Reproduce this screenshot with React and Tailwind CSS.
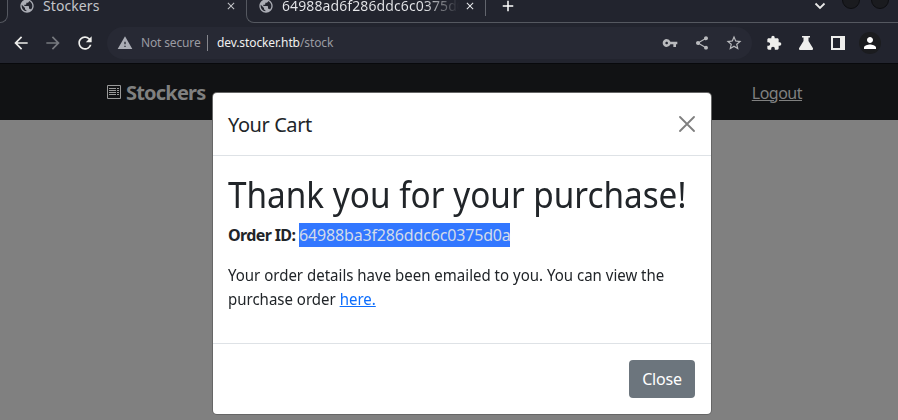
import React from "react";
import {
  MdPublic,
  MdClose,
  MdAdd,
  MdArrowBack,
  MdArrowForward,
  MdRefresh,
  MdWarning,
  MdVpnKey,
  MdShare,
  MdStarBorder,
  MdExtension,
  MdPerson,
} from "react-icons/md";

function TabStrip() {
  return (
    <div className="flex h-[23px] shrink-0 text-[#c4c5c9]">
      <div className="-ml-2 h-[23px] w-4 shrink-0 rounded-br-[8px] border-r border-b border-[#555860] bg-[#1d1f27]" />
      <div className="flex h-[23px] w-[238px] shrink-0 items-start pl-[11px]">
        <MdPublic className="-mt-[2px] size-[16px] shrink-0 text-[#abadb5]" />
        <span className="ml-[8px] flex-1 text-[14px] leading-[12px] tracking-[0.08px]">Stockers</span>
        <MdClose className="mt-0 mr-[9px] size-[12px] shrink-0" />
      </div>
      <div className="flex h-[23px] flex-1 items-start rounded-bl-[8px] border-b border-l border-[#555860] pl-[11px]">
        <MdPublic className="-mt-[2px] size-[16px] shrink-0 text-[#abadb5]" />
        <span className="ml-[8px] w-[177px] shrink-0 overflow-hidden bg-linear-to-r from-[#e7e8eb] from-80% to-transparent bg-clip-text text-[14px] leading-[12px] tracking-[0.1px] whitespace-nowrap text-transparent">
          64988ad6f286ddc6c0375d0a
        </span>
        <MdClose className="ml-[5px] size-[12px] shrink-0 text-[#e7e8eb]" />
        <div className="ml-[9px] h-4 w-px bg-[#62656d]" />
        <MdAdd className="-mt-[3px] ml-[13px] size-[18px] shrink-0 text-white" />
        <div className="flex-1" />
        <svg className="mt-[2px] mr-[16px] h-2 w-[12px]" viewBox="0 0 12 8" fill="none" stroke="#e8e8e8" strokeWidth="1.8">
          <path d="M1.5 1.5 6 6 10.500 1.500" />
        </svg>
        <div className="-mt-[9px] mr-[11px] size-[18px] rounded-full border border-[#0d0e11] bg-[#1a1b1f]" />
        <div className="-mt-[9px] mr-[9px] size-[18px] rounded-full border border-[#0d0e11] bg-[#1a1b1f]" />
      </div>
    </div>
  );
}

function Toolbar() {
  return (
    <div className="flex h-[41px] shrink-0 items-start border-b border-[#08090c] pt-1 text-[#eeeeec]">
      <div className="flex h-8 w-[107px] shrink-0 items-center pl-[11px]">
        <MdArrowBack className="size-5" />
        <MdArrowForward className="ml-3 size-5 text-[#77797f]" />
        <MdRefresh className="ml-3 size-5" />
      </div>
      <div className="flex h-8 w-[645px] shrink-0 items-center rounded-full bg-[#272934] pl-[10px] text-[12px] text-[#9a9ba2]">
        <MdWarning className="size-4 text-[#abadb5]" />
        <span className="ml-2 w-[60px] tracking-[-0.15px] whitespace-nowrap">Not secure</span>
        <div className="ml-[6px] h-4 w-px bg-[#85868d]" />
        <span className="ml-[9px] flex-1 tracking-[-0.1px] whitespace-nowrap">
          <span className="text-[#f0f0f0]">dev.stocker.htb</span>/stock
        </span>
        <MdVpnKey className="size-4 text-[#b9babd]" />
        <MdShare className="ml-4 size-4 text-[#b9babd]" />
        <MdStarBorder className="mr-[9px] ml-[15px] size-[18px] text-[#b9babd]" />
      </div>
      <div className="flex h-8 items-center pl-[14px]">
        <MdExtension className="size-4" />
        <svg className="ml-4 size-4" viewBox="0 0 16 16" fill="currentColor">
          <path d="M4 1h8v1.500h-1.500V6L15 13.300Q15.500 15 14 15H2Q.5 15 1 13.300L5.500 6V2.500H4z" />
        </svg>
        <svg className="ml-4 size-4" viewBox="0 0 16 16">
          <path fill="currentColor" fillRule="evenodd" d="M1 1h14v14H1zM3 3v10h7V3z" />
        </svg>
        <div className="ml-[13px] flex size-[22px] items-center justify-center rounded-full bg-[#1b1c1f]">
          <MdPerson className="size-[18px] text-white" />
        </div>
      </div>
    </div>
  );
}

function CartModal() {
  return (
    <div className="absolute top-[93px] left-[213px] flex h-[321px] w-[498px] flex-col rounded-[4px] bg-white text-[16px] leading-6 text-[#212529] shadow-[0_0_0_1px_#666]">
      <div className="flex h-[63px] items-center border-b border-[#dee2e6] px-[15px]">
        <h5 className="flex-1 pt-[2px] text-[20px] leading-[30px] tracking-[-0.42px]">Your Cart</h5>
        <svg className="mr-px size-4" viewBox="0 0 16 16" stroke="#7f7f7f" strokeWidth="1.8" strokeLinecap="round">
          <path d="M1 1 15 15M15 1 1 15" />
        </svg>
      </div>
      <div className="flex-1 px-[15px] pt-[17px]">
        <h1 className="h-[42px] w-max origin-left scale-x-[0.938] text-[35.500px] leading-[43px] whitespace-nowrap">
          Thank you for your purchase!
        </h1>
        <p className="mt-2 h-6 whitespace-nowrap">
          <span className="inline-block w-[71px] font-bold tracking-[-0.62px]">Order ID:</span>
          <span className="inline-block h-6 w-[211px] bg-[#3277ff] tracking-[-0.16px] text-[#d3dbea]">64988ba3f286ddc6c0375d0a</span>
        </p>
        <p className="mt-4 w-max origin-left scale-x-[0.938] whitespace-nowrap">
          Your order details have been emailed to you. You can view the
          <br />
          purchase order <span className="text-[#0d6efd] underline">here.</span>
        </p>
      </div>
      <div className="flex h-[71px] items-center justify-end border-t border-[#dee2e6] px-4">
        <button className="h-[38px] w-[66px] rounded-[4px] bg-[#6c757d] tracking-[-0.2px] text-white">Close</button>
      </div>
    </div>
  );
}

export default function App() {
  return (
    <div className="relative flex h-[420px] w-[898px] flex-col overflow-hidden bg-[#22242e] font-['Noto_Sans',sans-serif]">
      <TabStrip />
      <Toolbar />
      <nav className="flex h-14 shrink-0 items-center bg-[#111214] pr-24 pl-[107px] text-[#808080]">
        <svg className="size-[14px]" viewBox="0 0 14 14" fill="none" stroke="#999" strokeWidth="1">
          <path d="M.5.500h13v13H.5zM2 3.500h7M2 5.500h7M2 7.500h7M2 9.500h7M10 3.500h2M10 5.500h2M10 7.500h2M10 9.500h2" />
        </svg>
        <span className="ml-[5px] pt-[2px] text-[20px] font-bold tracking-[-0.8px]">Stockers</span>
        <span className="ml-auto pt-px text-[16px] tracking-[-0.5px] underline">Logout</span>
      </nav>
      <main className="flex-1 bg-[#808080]" />
      <CartModal />
    </div>
  );
}
